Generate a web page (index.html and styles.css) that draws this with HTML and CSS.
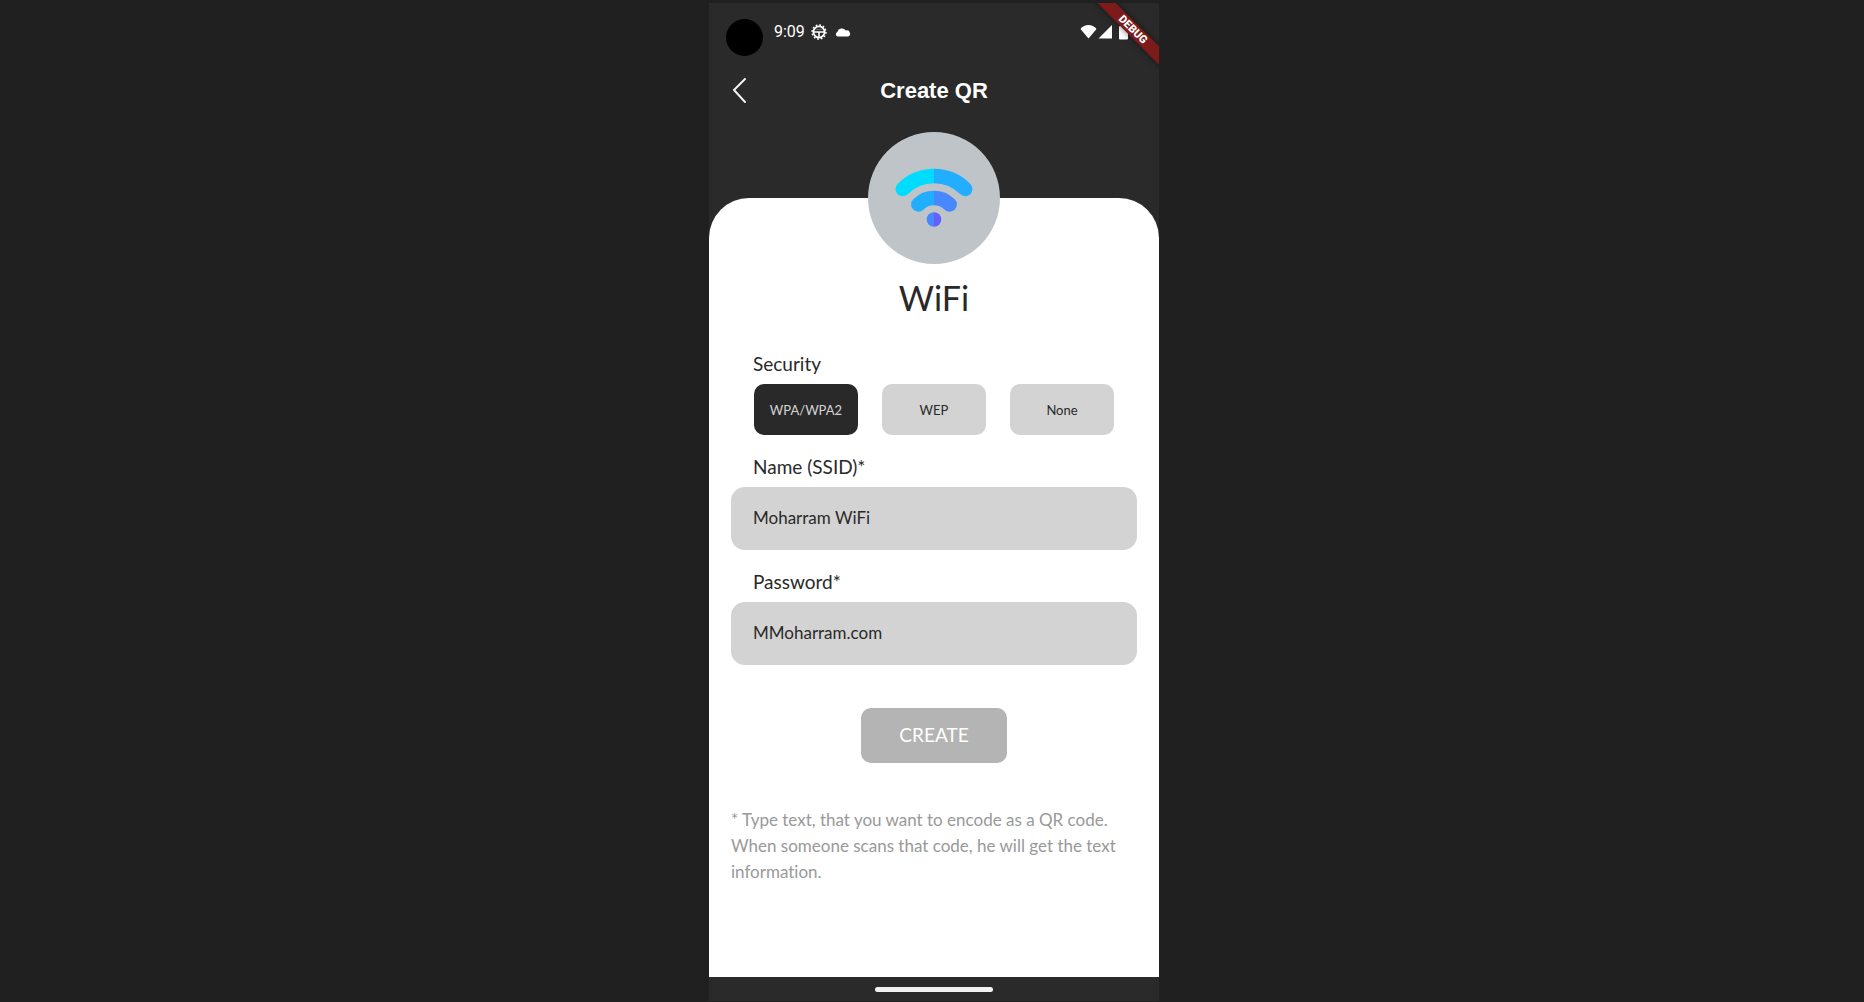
FILE: index.html
```html
<!DOCTYPE html>
<html lang="en">
<head>
<meta charset="utf-8">
<meta name="viewport" content="width=device-width, initial-scale=1">
<title>Create QR</title>
<link rel="stylesheet" href="styles.css">
</head>
<body class="stage">
<div class="phone">
  <div class="camera"></div>
  <div class="status">
    <span class="clock">9:09</span>
    <svg class="status-icon" width="16" height="16" viewBox="0 0 16 16" fill="none" stroke="#fff">
      <circle cx="8" cy="8" r="5.6" stroke-width="1.8"/>
      <circle cx="8" cy="8" r="7" stroke-width="1.4" stroke-dasharray="1.8 1.865"/>
      <path d="M2.5 8h11M8 8v5.5" stroke-width="1.6"/>
      <path d="M5 5.5h6" stroke-width="1" opacity=".3"/>
    </svg>
    <svg class="status-icon" width="16" height="10" viewBox="0 0 16 10" fill="#fff">
      <path d="M2.5 9.5A2.4 2.4 0 0 1 2.3 5 4.7 4.7 0 0 1 10.8 3.6 3 3 0 0 1 13 9.5z"/>
    </svg>
    <span class="signals">
      <svg width="17" height="16" viewBox="0 0 17 16" fill="#fff"><path d="M.5 5C4.5-.2 12.5-.2 16.5 5L8.5 14.5z"/></svg>
      <svg width="14" height="16" viewBox="0 0 14 16" fill="#fff"><path d="M14 1v13.5H.5z"/></svg>
      <svg class="battery" width="9" height="16" viewBox="0 0 9 16" fill="#fff"><path d="M2.5 0h4v2H8q1 0 1 1v11.5q0 1-1 1H1q-1 0-1-1V3q0-1 1-1h1.5z"/></svg>
    </span>
  </div>
  <header class="app-bar">
    <button class="back" type="button" aria-label="Back">
      <svg width="16" height="26" viewBox="0 0 16 26" fill="none" stroke="#f2f2f2" stroke-width="2" stroke-linecap="round" stroke-linejoin="round"><path d="M14 1 3 12l11 12"/></svg>
    </button>
    <h1 class="app-title">Create QR</h1>
  </header>
  <main class="card">
    <div class="badge">
      <svg width="78" height="60" viewBox="0 0 78 60" fill="none" stroke-width="14.5" stroke-linecap="round">
        <defs>
          <clipPath id="left"><path d="M0 0h39v60H0z"/></clipPath>
          <clipPath id="right"><path d="M39 0h39v60H39z"/></clipPath>
        </defs>
        <g clip-path="url(#left)">
          <path d="M7.8 21A44 44 0 0 1 70.2 21" stroke="#00dcff"/>
          <path d="M23.3 36.5A22.5 22.5 0 0 1 54.7 36.5" stroke="#22aeff"/>
          <circle cx="39" cy="51.5" r="7.3" fill="#4788ff" stroke="none"/>
        </g>
        <g clip-path="url(#right)">
          <path d="M7.8 21A44 44 0 0 1 70.2 21" stroke="#22aeff"/>
          <path d="M23.3 36.5A22.5 22.5 0 0 1 54.7 36.5" stroke="#4788ff"/>
          <circle cx="39" cy="51.5" r="7.3" fill="#6360ff" stroke="none"/>
        </g>
      </svg>
    </div>
    <h2 class="kind">WiFi</h2>
    <form class="form">
      <div class="field">
        <span class="label" id="security">Security</span>
        <div class="choices" role="group" aria-labelledby="security">
          <button class="choice choice-on" type="button" aria-pressed="true">WPA/WPA2</button>
          <button class="choice" type="button" aria-pressed="false">WEP</button>
          <button class="choice" type="button" aria-pressed="false">None</button>
        </div>
      </div>
      <div class="field">
        <label class="label" for="ssid">Name (SSID)*</label>
        <input class="input" id="ssid" type="text" value="Moharram WiFi">
      </div>
      <div class="field">
        <label class="label" for="password">Password*</label>
        <input class="input" id="password" type="text" value="MMoharram.com">
      </div>
      <button class="create" type="submit">CREATE</button>
    </form>
    <p class="hint">* Type text, that you want to encode as a QR code. When someone scans that code, he will get the text information.</p>
  </main>
  <div class="nav-bar"><div class="nav-handle"></div></div>
  <div class="ribbon"><span class="ribbon-band">DEBUG</span></div>
</div>
</body>
</html>
```

FILE: styles.css
```css
*, *::before, *::after { box-sizing: border-box; }

.stage {
  margin: 0;
  min-height: 100vh;
  padding: 3px 0 1px 4px;
  display: flex;
  justify-content: center;
  background: #202020;
  font-family: Lato, "Open Sans", sans-serif;
  font-variant-ligatures: none;
  color: #292929;
}

button, input { font: inherit; color: inherit; border: 0; }

.phone {
  position: relative;
  width: 100%;
  max-width: 450px;
  display: flex;
  flex-direction: column;
  overflow: hidden;
  background: #2a2a2a;
}

/* Status bar */
.camera {
  position: absolute;
  left: 17px;
  top: 16px;
  width: 37px;
  height: 37px;
  border-radius: 50%;
  background: #000;
}
.status {
  height: 56px;
  padding: 2px 31px 0 65px;
  display: flex;
  align-items: center;
  gap: 6px;
  color: #fff;
}
.clock { font: 16px/20px Roboto, sans-serif; }
.status-icon { margin-right: 2px; }
.signals { margin-left: auto; display: flex; align-items: center; gap: 1px; }
.battery { margin-left: 6px; }

/* Title bar */
.app-bar {
  height: 64px;
  padding: 0 22px;
  display: grid;
  grid-template-columns: 24px 1fr 24px;
  align-items: center;
}
.back { padding: 0; background: none; display: flex; }
.app-title {
  margin: 0;
  text-align: center;
  font: bold 22px/28px "Liberation Sans", Arial, sans-serif;
  color: #fff;
}

/* Sheet */
.card {
  flex: 1;
  margin-top: 75px;
  padding: 0 22px 40px;
  display: flex;
  flex-direction: column;
  align-items: center;
  border-radius: 40px 40px 0 0;
  background: #fff;
}
.badge {
  width: 132px;
  height: 132px;
  margin-top: -66px;
  display: grid;
  place-items: center;
  border-radius: 50%;
  background: #bec4c8;
}
.kind { margin: 12px 0 32px; font-size: 34px; line-height: 44px; font-weight: 400; }

.form {
  width: 100%;
  display: flex;
  flex-direction: column;
  gap: 20px;
}
.field { display: flex; flex-direction: column; gap: 8px; }
.label { padding-left: 22px; font-size: 19px; line-height: 24px; }
.choices {
  padding: 0 23px;
  display: grid;
  grid-template-columns: repeat(3, 1fr);
  gap: 24px;
}
.choice {
  height: 51px;
  padding: 0;
  border-radius: 10px;
  background: #d3d3d3;
  font-size: 13px;
}
.choice-on { background: #292929; color: #d3d3d3; }
.input {
  width: 100%;
  height: 63px;
  padding: 0 22px 2px;
  border-radius: 14px;
  background: #d3d3d3;
  font-size: 17px;
}
.create {
  align-self: center;
  width: 146px;
  height: 55px;
  margin-top: 23px;
  padding: 0 0 2px;
  border-radius: 10px;
  background: #b4b4b4;
  color: #fff;
  font-size: 19px;
}
.hint {
  margin: 44px 0 0;
  font-size: 17px;
  line-height: 26px;
  color: #999;
}

/* Gesture bar */
.nav-bar { height: 24px; display: grid; place-items: center; }
.nav-handle { width: 118px; height: 5px; border-radius: 3px; background: #f2f2f2; }

/* Corner ribbon */
.ribbon {
  position: absolute;
  top: 0;
  right: 0;
  width: 52px;
  height: 52px;
  display: grid;
  place-content: center;
}
.ribbon-band {
  width: 120px;
  text-align: center;
  font: 900 11px/13px Roboto, sans-serif;
  color: #fff;
  background: #7d1b1b;
  box-shadow: 0 0 6px rgba(0, 0, 0, .5);
  transform: rotate(45deg);
}
```
